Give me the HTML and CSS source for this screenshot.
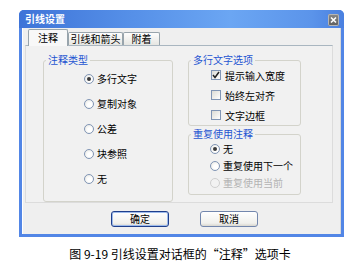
FILE: index.html
```html
<!doctype html>
<html>
<head>
    <meta charset="utf-8">
    <title>引线设置</title>
    <link rel="stylesheet" href="styles.css">
</head>
<body>
<div class="dlg">
    <div class="titlebar">
        <span class="title">引线设置</span>
        <span class="close">
            <svg width="11" height="12" viewBox="0 0 11 12">
                <path d="M3 3.5 L8 8.5 M8 3.5 L3 8.5" stroke="#fff" stroke-width="1.6" fill="none"/>
            </svg>
        </span>
    </div>
    <div class="client">
        <div class="tabs">
            <div class="tab active" style="width:40px">注释</div>
            <div class="tab" style="width:55px">引线和箭头</div>
            <div class="tab" style="width:37px">附着</div>
        </div>
        <div class="panel">
            <fieldset class="grp grp-type">
                <legend>注释类型</legend>
                <div class="opts">
                    <label class="opt"><span class="radio on"></span>多行文字</label>
                    <label class="opt"><span class="radio"></span>复制对象</label>
                    <label class="opt"><span class="radio"></span>公差</label>
                    <label class="opt"><span class="radio"></span>块参照</label>
                    <label class="opt"><span class="radio"></span>无</label>
                </div>
            </fieldset>
            <div class="col">
                <fieldset class="grp grp-mtext">
                    <legend>多行文字选项</legend>
                    <div class="opts">
                        <label class="opt"><span class="check on">
                            <svg width="8" height="8" viewBox="0 0 8 8"><path d="M1 4 L3 6.5 L7 1" stroke="#222" stroke-width="1.5" fill="none"/></svg>
                        </span>提示输入宽度</label>
                        <label class="opt"><span class="check"></span>始终左对齐</label>
                        <label class="opt"><span class="check"></span>文字边框</label>
                    </div>
                </fieldset>
                <fieldset class="grp grp-reuse">
                    <legend>重复使用注释</legend>
                    <div class="opts">
                        <label class="opt"><span class="radio on"></span>无</label>
                        <label class="opt"><span class="radio"></span>重复使用下一个</label>
                        <label class="opt off"><span class="radio"></span>重复使用当前</label>
                    </div>
                </fieldset>
            </div>
        </div>
        <div class="buttons">
            <button type="button" class="btn default">确定</button>
            <button type="button" class="btn">取消</button>
        </div>
    </div>
</div>
<p class="caption">图 9-19 引线设置对话框的“注释”选项卡</p>
</body>
</html>
```

FILE: styles.css
```css
body {
    margin: 0;
    background: #fff;
    font-family: "Noto Sans CJK SC", sans-serif;
    color: #000;
}

.dlg {
    margin: 10px 0 0 19px;
    width: 325px;
    height: 227px;
    box-sizing: border-box;
    padding: 0 3px 3px;
    background: #5286e6;
    border-radius: 5px 5px 0 0;
    display: flex;
    flex-direction: column;
}

.titlebar {
    height: 18px;
    margin: 0 -3px;
    padding: 0 5px 0 6px;
    display: flex;
    align-items: center;
    justify-content: space-between;
    border-radius: 5px 5px 0 0;
    background: linear-gradient(90deg, #3e74d8 0%, #5690e8 35%, #6ba6f3 65%, #5b94ea 90%, #4a80e0 100%);
}

.title {
    color: #fff;
    font-size: 10px;
    font-weight: bold;
    line-height: 12px;
}

.close {
    width: 11px;
    height: 12px;
    margin-top: 2px;
    border-radius: 2px;
    background: linear-gradient(#8a8a8a, #5e5e5e);
    box-shadow: inset 0 0 0 1px #b5b5b5;
    display: flex;
}

.client {
    flex: 1;
    background: #efefef;
    box-shadow: inset 1px 0 0 #fff, inset -1px 0 0 #d8d8d8;
}

.tabs {
    height: 17px;
    padding-left: 6px;
    display: flex;
    align-items: flex-end;
}

.tab {
    height: 13px;
    box-sizing: border-box;
    border: 1px solid #98a4ac;
    border-bottom: 0;
    border-radius: 2px 2px 0 0;
    background: linear-gradient(#fdfdfd, #e6e6e2);
    font-size: 10px;
    line-height: 12px;
    text-align: center;
}

.tab.active {
    height: 17px;
    margin-bottom: -1px;
    position: relative;
    z-index: 1;
    background: #f8f8f8;
    line-height: 15px;
}

.panel {
    margin-left: 3px;
    width: 308px;
    height: 158px;
    box-sizing: border-box;
    border: 1px solid #dcdcdc;
    border-top-color: #a9b6c0;
    background: #f1f1f1;
    padding: 8px 0 0 17px;
    display: flex;
    gap: 15px;
}

.grp {
    margin: 0;
    padding: 0;
    min-width: 0;
    border: 1px solid #d3d3cb;
    border-radius: 3px;
}

.grp legend {
    margin-left: 2px;
    padding: 0 2px;
    font-size: 10px;
    line-height: 12px;
    color: #1f55d2;
}

.grp-type {
    width: 130px;
    box-sizing: border-box;
}

.grp-type .opts {
    padding: 0 0 3px 40px;
}

.grp-type .opt {
    height: 25px;
}

.col {
    width: 113px;
    display: flex;
    flex-direction: column;
    gap: 2px;
}

.grp-mtext .opts {
    margin-top: -1px;
    padding-left: 22px;
}

.grp-mtext .opt {
    height: 20px;
}

.grp-reuse .opts {
    padding: 0 0 3px 21px;
}

.grp-reuse .opt {
    height: 17px;
}

.opt {
    display: flex;
    align-items: center;
    gap: 3px;
    font-size: 10px;
    white-space: nowrap;
}

.opt.off {
    color: #b3b3b3;
}

.radio {
    width: 10px;
    height: 10px;
    box-sizing: border-box;
    border: 1px solid #8095b5;
    border-radius: 50%;
    background: radial-gradient(circle at 60% 60%, #fff 30%, #e2e2dc);
    display: flex;
    align-items: center;
    justify-content: center;
}

.radio.on::after {
    content: "";
    width: 4px;
    height: 4px;
    border-radius: 50%;
    background: #3a3a3a;
}

.off .radio {
    border-color: #cfcfcf;
    background: #f2f2f2;
}

.check {
    width: 10px;
    height: 10px;
    box-sizing: border-box;
    border: 1px solid #8095b5;
    background: linear-gradient(135deg, #dcdcd6, #fff);
    display: flex;
    align-items: center;
    justify-content: center;
    margin-right: 1px;
}

.buttons {
    margin-top: 8px;
    padding-left: 89px;
    display: flex;
    gap: 31px;
}

.btn {
    width: 58px;
    height: 16px;
    padding: 0;
    border: 1px solid #7387ad;
    border-radius: 3px;
    background: linear-gradient(#fff, #f0f0ec 80%, #d8d6cf);
    font-family: "Noto Sans CJK SC", sans-serif;
    font-size: 10px;
    line-height: 14px;
    color: #000;
}

.btn.default {
    border-color: #1f3f8c;
    box-shadow: inset 0 0 0 1px #9ebbeb;
}

.caption {
    margin: 9px 0 0;
    text-align: center;
    font-size: 12px;
    line-height: 16px;
}
```
